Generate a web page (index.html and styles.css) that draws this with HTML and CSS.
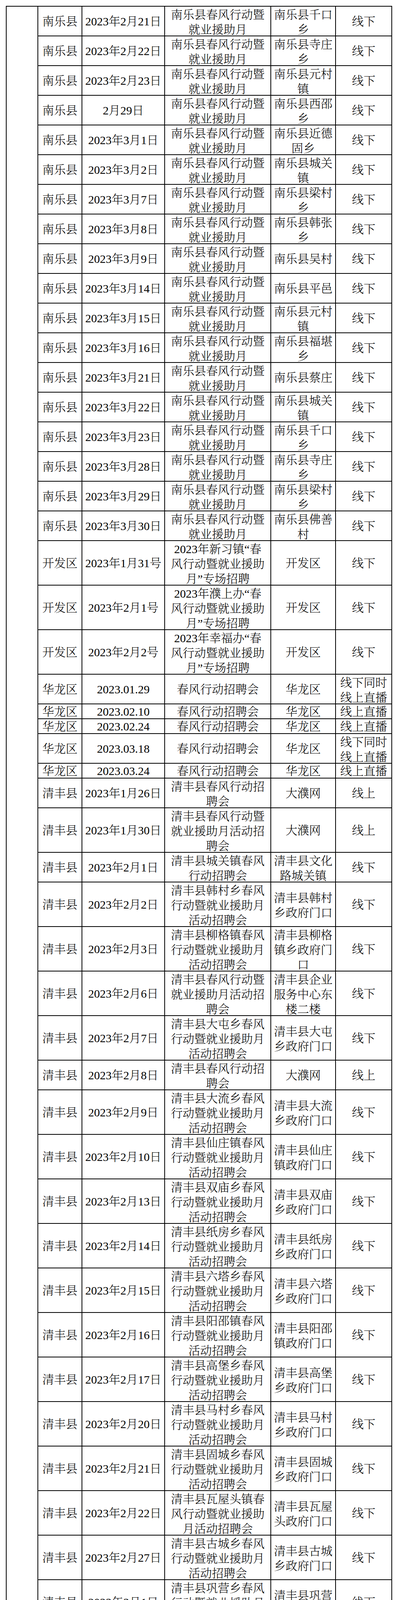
FILE: index.html
```html
<!DOCTYPE html>
<html lang="zh-CN">
<head>
<meta charset="utf-8">
<title>春风行动招聘会安排表</title>
<link rel="stylesheet" href="styles.css">
</head>
<body>
<table class="sheet">
<colgroup>
<col class="c-blank"><col class="c-area"><col class="c-date"><col class="c-name"><col class="c-place"><col class="c-mode">
</colgroup>
<tbody>
<tr><td class="blank" rowspan="64"></td><td><div class="t"><span>南乐县</span></div></td><td><div class="t"><span>2023年2月21日</span></div></td><td><div class="t m"><span>南乐县春风行动暨</span><span>就业援助月</span></div></td><td><div class="t m"><span>南乐县千口</span><span>乡</span></div></td><td><div class="t"><span>线下</span></div></td></tr>
<tr><td><div class="t"><span>南乐县</span></div></td><td><div class="t"><span>2023年2月22日</span></div></td><td><div class="t m"><span>南乐县春风行动暨</span><span>就业援助月</span></div></td><td><div class="t m"><span>南乐县寺庄</span><span>乡</span></div></td><td><div class="t"><span>线下</span></div></td></tr>
<tr><td><div class="t"><span>南乐县</span></div></td><td><div class="t"><span>2023年2月23日</span></div></td><td><div class="t m"><span>南乐县春风行动暨</span><span>就业援助月</span></div></td><td><div class="t m"><span>南乐县元村</span><span>镇</span></div></td><td><div class="t"><span>线下</span></div></td></tr>
<tr><td><div class="t"><span>南乐县</span></div></td><td><div class="t"><span>2月29日</span></div></td><td><div class="t m"><span>南乐县春风行动暨</span><span>就业援助月</span></div></td><td><div class="t m"><span>南乐县西邵</span><span>乡</span></div></td><td><div class="t"><span>线下</span></div></td></tr>
<tr><td><div class="t"><span>南乐县</span></div></td><td><div class="t"><span>2023年3月1日</span></div></td><td><div class="t m"><span>南乐县春风行动暨</span><span>就业援助月</span></div></td><td><div class="t m"><span>南乐县近德</span><span>固乡</span></div></td><td><div class="t"><span>线下</span></div></td></tr>
<tr><td><div class="t"><span>南乐县</span></div></td><td><div class="t"><span>2023年3月2日</span></div></td><td><div class="t m"><span>南乐县春风行动暨</span><span>就业援助月</span></div></td><td><div class="t m"><span>南乐县城关</span><span>镇</span></div></td><td><div class="t"><span>线下</span></div></td></tr>
<tr><td><div class="t"><span>南乐县</span></div></td><td><div class="t"><span>2023年3月7日</span></div></td><td><div class="t m"><span>南乐县春风行动暨</span><span>就业援助月</span></div></td><td><div class="t m"><span>南乐县梁村</span><span>乡</span></div></td><td><div class="t"><span>线下</span></div></td></tr>
<tr><td><div class="t"><span>南乐县</span></div></td><td><div class="t"><span>2023年3月8日</span></div></td><td><div class="t m"><span>南乐县春风行动暨</span><span>就业援助月</span></div></td><td><div class="t m"><span>南乐县韩张</span><span>乡</span></div></td><td><div class="t"><span>线下</span></div></td></tr>
<tr><td><div class="t"><span>南乐县</span></div></td><td><div class="t"><span>2023年3月9日</span></div></td><td><div class="t m"><span>南乐县春风行动暨</span><span>就业援助月</span></div></td><td><div class="t"><span>南乐县吴村</span></div></td><td><div class="t"><span>线下</span></div></td></tr>
<tr><td><div class="t"><span>南乐县</span></div></td><td><div class="t"><span>2023年3月14日</span></div></td><td><div class="t m"><span>南乐县春风行动暨</span><span>就业援助月</span></div></td><td><div class="t"><span>南乐县平邑</span></div></td><td><div class="t"><span>线下</span></div></td></tr>
<tr><td><div class="t"><span>南乐县</span></div></td><td><div class="t"><span>2023年3月15日</span></div></td><td><div class="t m"><span>南乐县春风行动暨</span><span>就业援助月</span></div></td><td><div class="t m"><span>南乐县元村</span><span>镇</span></div></td><td><div class="t"><span>线下</span></div></td></tr>
<tr><td><div class="t"><span>南乐县</span></div></td><td><div class="t"><span>2023年3月16日</span></div></td><td><div class="t m"><span>南乐县春风行动暨</span><span>就业援助月</span></div></td><td><div class="t m"><span>南乐县福堪</span><span>乡</span></div></td><td><div class="t"><span>线下</span></div></td></tr>
<tr><td><div class="t"><span>南乐县</span></div></td><td><div class="t"><span>2023年3月21日</span></div></td><td><div class="t m"><span>南乐县春风行动暨</span><span>就业援助月</span></div></td><td><div class="t"><span>南乐县蔡庄</span></div></td><td><div class="t"><span>线下</span></div></td></tr>
<tr><td><div class="t"><span>南乐县</span></div></td><td><div class="t"><span>2023年3月22日</span></div></td><td><div class="t m"><span>南乐县春风行动暨</span><span>就业援助月</span></div></td><td><div class="t m"><span>南乐县城关</span><span>镇</span></div></td><td><div class="t"><span>线下</span></div></td></tr>
<tr><td><div class="t"><span>南乐县</span></div></td><td><div class="t"><span>2023年3月23日</span></div></td><td><div class="t m"><span>南乐县春风行动暨</span><span>就业援助月</span></div></td><td><div class="t m"><span>南乐县千口</span><span>乡</span></div></td><td><div class="t"><span>线下</span></div></td></tr>
<tr><td><div class="t"><span>南乐县</span></div></td><td><div class="t"><span>2023年3月28日</span></div></td><td><div class="t m"><span>南乐县春风行动暨</span><span>就业援助月</span></div></td><td><div class="t m"><span>南乐县寺庄</span><span>乡</span></div></td><td><div class="t"><span>线下</span></div></td></tr>
<tr><td><div class="t"><span>南乐县</span></div></td><td><div class="t"><span>2023年3月29日</span></div></td><td><div class="t m"><span>南乐县春风行动暨</span><span>就业援助月</span></div></td><td><div class="t m"><span>南乐县梁村</span><span>乡</span></div></td><td><div class="t"><span>线下</span></div></td></tr>
<tr><td><div class="t"><span>南乐县</span></div></td><td><div class="t"><span>2023年3月30日</span></div></td><td><div class="t m"><span>南乐县春风行动暨</span><span>就业援助月</span></div></td><td><div class="t m"><span>南乐县佛善</span><span>村</span></div></td><td><div class="t"><span>线下</span></div></td></tr>
<tr><td><div class="t"><span>开发区</span></div></td><td><div class="t"><span>2023年1月31号</span></div></td><td><div class="t m"><span>2023年新习镇“春</span><span>风行动暨就业援助</span><span>月”专场招聘</span></div></td><td><div class="t"><span>开发区</span></div></td><td><div class="t"><span>线下</span></div></td></tr>
<tr><td><div class="t"><span>开发区</span></div></td><td><div class="t"><span>2023年2月1号</span></div></td><td><div class="t m"><span>2023年濮上办“春</span><span>风行动暨就业援助</span><span>月”专场招聘</span></div></td><td><div class="t"><span>开发区</span></div></td><td><div class="t"><span>线下</span></div></td></tr>
<tr><td><div class="t"><span>开发区</span></div></td><td><div class="t"><span>2023年2月2号</span></div></td><td><div class="t m"><span>2023年幸福办“春</span><span>风行动暨就业援助</span><span>月”专场招聘</span></div></td><td><div class="t"><span>开发区</span></div></td><td><div class="t"><span>线下</span></div></td></tr>
<tr><td><div class="t"><span>华龙区</span></div></td><td><div class="t"><span>2023.01.29</span></div></td><td><div class="t"><span>春风行动招聘会</span></div></td><td><div class="t"><span>华龙区</span></div></td><td><div class="t m"><span>线下同时</span><span>线上直播</span></div></td></tr>
<tr><td><div class="t"><span>华龙区</span></div></td><td><div class="t"><span>2023.02.10</span></div></td><td><div class="t"><span>春风行动招聘会</span></div></td><td><div class="t"><span>华龙区</span></div></td><td><div class="t"><span>线上直播</span></div></td></tr>
<tr><td><div class="t"><span>华龙区</span></div></td><td><div class="t"><span>2023.02.24</span></div></td><td><div class="t"><span>春风行动招聘会</span></div></td><td><div class="t"><span>华龙区</span></div></td><td><div class="t"><span>线上直播</span></div></td></tr>
<tr><td><div class="t"><span>华龙区</span></div></td><td><div class="t"><span>2023.03.18</span></div></td><td><div class="t"><span>春风行动招聘会</span></div></td><td><div class="t"><span>华龙区</span></div></td><td><div class="t m"><span>线下同时</span><span>线上直播</span></div></td></tr>
<tr><td><div class="t"><span>华龙区</span></div></td><td><div class="t"><span>2023.03.24</span></div></td><td><div class="t"><span>春风行动招聘会</span></div></td><td><div class="t"><span>华龙区</span></div></td><td><div class="t"><span>线上直播</span></div></td></tr>
<tr><td><div class="t"><span>清丰县</span></div></td><td><div class="t"><span>2023年1月26日</span></div></td><td><div class="t m"><span>清丰县春风行动招</span><span>聘会</span></div></td><td><div class="t"><span>大濮网</span></div></td><td><div class="t"><span>线上</span></div></td></tr>
<tr><td><div class="t"><span>清丰县</span></div></td><td><div class="t"><span>2023年1月30日</span></div></td><td><div class="t m"><span>清丰县春风行动暨</span><span>就业援助月活动招</span><span>聘会</span></div></td><td><div class="t"><span>大濮网</span></div></td><td><div class="t"><span>线上</span></div></td></tr>
<tr><td><div class="t"><span>清丰县</span></div></td><td><div class="t"><span>2023年2月1日</span></div></td><td><div class="t m"><span>清丰县城关镇春风</span><span>行动招聘会</span></div></td><td><div class="t m"><span>清丰县文化</span><span>路城关镇</span></div></td><td><div class="t"><span>线下</span></div></td></tr>
<tr><td><div class="t"><span>清丰县</span></div></td><td><div class="t"><span>2023年2月2日</span></div></td><td><div class="t m"><span>清丰县韩村乡春风</span><span>行动暨就业援助月</span><span>活动招聘会</span></div></td><td><div class="t m"><span>清丰县韩村</span><span>乡政府门口</span></div></td><td><div class="t"><span>线下</span></div></td></tr>
<tr><td><div class="t"><span>清丰县</span></div></td><td><div class="t"><span>2023年2月3日</span></div></td><td><div class="t m"><span>清丰县柳格镇春风</span><span>行动暨就业援助月</span><span>活动招聘会</span></div></td><td><div class="t m"><span>清丰县柳格</span><span>镇乡政府门</span><span>口</span></div></td><td><div class="t"><span>线下</span></div></td></tr>
<tr><td><div class="t"><span>清丰县</span></div></td><td><div class="t"><span>2023年2月6日</span></div></td><td><div class="t m"><span>清丰县春风行动暨</span><span>就业援助月活动招</span><span>聘会</span></div></td><td><div class="t m"><span>清丰县企业</span><span>服务中心东</span><span>楼二楼</span></div></td><td><div class="t"><span>线下</span></div></td></tr>
<tr><td><div class="t"><span>清丰县</span></div></td><td><div class="t"><span>2023年2月7日</span></div></td><td><div class="t m"><span>清丰县大屯乡春风</span><span>行动暨就业援助月</span><span>活动招聘会</span></div></td><td><div class="t m"><span>清丰县大屯</span><span>乡政府门口</span></div></td><td><div class="t"><span>线下</span></div></td></tr>
<tr><td><div class="t"><span>清丰县</span></div></td><td><div class="t"><span>2023年2月8日</span></div></td><td><div class="t m"><span>清丰县春风行动招</span><span>聘会</span></div></td><td><div class="t"><span>大濮网</span></div></td><td><div class="t"><span>线上</span></div></td></tr>
<tr><td><div class="t"><span>清丰县</span></div></td><td><div class="t"><span>2023年2月9日</span></div></td><td><div class="t m"><span>清丰县大流乡春风</span><span>行动暨就业援助月</span><span>活动招聘会</span></div></td><td><div class="t m"><span>清丰县大流</span><span>乡政府门口</span></div></td><td><div class="t"><span>线下</span></div></td></tr>
<tr><td><div class="t"><span>清丰县</span></div></td><td><div class="t"><span>2023年2月10日</span></div></td><td><div class="t m"><span>清丰县仙庄镇春风</span><span>行动暨就业援助月</span><span>活动招聘会</span></div></td><td><div class="t m"><span>清丰县仙庄</span><span>镇政府门口</span></div></td><td><div class="t"><span>线下</span></div></td></tr>
<tr><td><div class="t"><span>清丰县</span></div></td><td><div class="t"><span>2023年2月13日</span></div></td><td><div class="t m"><span>清丰县双庙乡春风</span><span>行动暨就业援助月</span><span>活动招聘会</span></div></td><td><div class="t m"><span>清丰县双庙</span><span>乡政府门口</span></div></td><td><div class="t"><span>线下</span></div></td></tr>
<tr><td><div class="t"><span>清丰县</span></div></td><td><div class="t"><span>2023年2月14日</span></div></td><td><div class="t m"><span>清丰县纸房乡春风</span><span>行动暨就业援助月</span><span>活动招聘会</span></div></td><td><div class="t m"><span>清丰县纸房</span><span>乡政府门口</span></div></td><td><div class="t"><span>线下</span></div></td></tr>
<tr><td><div class="t"><span>清丰县</span></div></td><td><div class="t"><span>2023年2月15日</span></div></td><td><div class="t m"><span>清丰县六塔乡春风</span><span>行动暨就业援助月</span><span>活动招聘会</span></div></td><td><div class="t m"><span>清丰县六塔</span><span>乡政府门口</span></div></td><td><div class="t"><span>线下</span></div></td></tr>
<tr><td><div class="t"><span>清丰县</span></div></td><td><div class="t"><span>2023年2月16日</span></div></td><td><div class="t m"><span>清丰县阳邵镇春风</span><span>行动暨就业援助月</span><span>活动招聘会</span></div></td><td><div class="t m"><span>清丰县阳邵</span><span>镇政府门口</span></div></td><td><div class="t"><span>线下</span></div></td></tr>
<tr><td><div class="t"><span>清丰县</span></div></td><td><div class="t"><span>2023年2月17日</span></div></td><td><div class="t m"><span>清丰县高堡乡春风</span><span>行动暨就业援助月</span><span>活动招聘会</span></div></td><td><div class="t m"><span>清丰县高堡</span><span>乡政府门口</span></div></td><td><div class="t"><span>线下</span></div></td></tr>
<tr><td><div class="t"><span>清丰县</span></div></td><td><div class="t"><span>2023年2月20日</span></div></td><td><div class="t m"><span>清丰县马村乡春风</span><span>行动暨就业援助月</span><span>活动招聘会</span></div></td><td><div class="t m"><span>清丰县马村</span><span>乡政府门口</span></div></td><td><div class="t"><span>线下</span></div></td></tr>
<tr><td><div class="t"><span>清丰县</span></div></td><td><div class="t"><span>2023年2月21日</span></div></td><td><div class="t m"><span>清丰县固城乡春风</span><span>行动暨就业援助月</span><span>活动招聘会</span></div></td><td><div class="t m"><span>清丰县固城</span><span>乡政府门口</span></div></td><td><div class="t"><span>线下</span></div></td></tr>
<tr><td><div class="t"><span>清丰县</span></div></td><td><div class="t"><span>2023年2月22日</span></div></td><td><div class="t m"><span>清丰县瓦屋头镇春</span><span>风行动暨就业援助</span><span>月活动招聘会</span></div></td><td><div class="t m"><span>清丰县瓦屋</span><span>头政府门口</span></div></td><td><div class="t"><span>线下</span></div></td></tr>
<tr><td><div class="t"><span>清丰县</span></div></td><td><div class="t"><span>2023年2月27日</span></div></td><td><div class="t m"><span>清丰县古城乡春风</span><span>行动暨就业援助月</span><span>活动招聘会</span></div></td><td><div class="t m"><span>清丰县古城</span><span>乡政府门口</span></div></td><td><div class="t"><span>线下</span></div></td></tr>
<tr><td><div class="t"><span>清丰县</span></div></td><td><div class="t"><span>2023年3月1日</span></div></td><td><div class="t m"><span>清丰县巩营乡春风</span><span>行动暨就业援助月</span><span>活动招聘会</span></div></td><td><div class="t m"><span>清丰县巩营</span><span>乡政府门口</span></div></td><td><div class="t"><span>线下</span></div></td></tr>
<tr><td><div class="t"><span>清丰县</span></div></td><td><div class="t"><span>2023年3月3日</span></div></td><td><div class="t m"><span>清丰县春风行动暨</span><span>就业援助月活动招</span><span>聘会</span></div></td><td><div class="t"><span>大濮网</span></div></td><td><div class="t"><span>线上</span></div></td></tr>
<tr><td><div class="t"><span>清丰县</span></div></td><td><div class="t"><span>2023年3月9日</span></div></td><td><div class="t m"><span>清丰县春风行动招</span><span>聘会</span></div></td><td><div class="t m"><span>清丰县企业</span><span>服务中心东</span><span>楼二楼</span></div></td><td><div class="t"><span>线下</span></div></td></tr>
<tr><td><div class="t"><span>清丰县</span></div></td><td><div class="t"><span>2023年3月12日</span></div></td><td><div class="t m"><span>清丰县六塔乡春风</span><span>行动招聘会</span></div></td><td><div class="t m"><span>清丰县六塔</span><span>乡政府门口</span></div></td><td><div class="t"><span>线下</span></div></td></tr>
<tr><td><div class="t"><span>清丰县</span></div></td><td><div class="t"><span>2023年3月13日</span></div></td><td><div class="t m"><span>清丰县城关镇春风</span><span>行动招聘会</span></div></td><td><div class="t m"><span>清丰县文化</span><span>路城关镇</span></div></td><td><div class="t"><span>线下</span></div></td></tr>
<tr><td><div class="t"><span>清丰县</span></div></td><td><div class="t"><span>2023年3月17日</span></div></td><td><div class="t m"><span>清丰县大屯乡春风</span><span>行动招聘会</span></div></td><td><div class="t m"><span>清丰县大屯</span><span>乡政府门口</span></div></td><td><div class="t"><span>线下</span></div></td></tr>
<tr><td><div class="t"><span>清丰县</span></div></td><td><div class="t"><span>2023年3月21日</span></div></td><td><div class="t m"><span>清丰县马村乡春风</span><span>行动招聘会</span></div></td><td><div class="t m"><span>清丰县马村</span><span>乡政府门口</span></div></td><td><div class="t"><span>线下</span></div></td></tr>
<tr><td><div class="t"><span>清丰县</span></div></td><td><div class="t"><span>2023年3月24日</span></div></td><td><div class="t m"><span>清丰县大屯乡春风</span><span>行动招聘会</span></div></td><td><div class="t m"><span>清丰县大屯</span><span>乡政府门口</span></div></td><td><div class="t"><span>线下</span></div></td></tr>
<tr><td><div class="t"><span>清丰县</span></div></td><td><div class="t"><span>2023年3月27日</span></div></td><td><div class="t m"><span>清丰县韩村镇春风</span><span>行动招聘会</span></div></td><td><div class="t m"><span>清丰县韩村</span><span>镇政府门口</span></div></td><td><div class="t"><span>线下</span></div></td></tr>
<tr><td><div class="t"><span>清丰县</span></div></td><td><div class="t"><span>2023年3月31日</span></div></td><td><div class="t m"><span>清丰县柳格镇春风</span><span>行动招聘会</span></div></td><td><div class="t m"><span>清丰县柳格</span><span>镇政府门口</span></div></td><td><div class="t"><span>线下</span></div></td></tr>
<tr><td><div class="t"><span>濮阳县</span></div></td><td><div class="t"><span>2023年1月17日</span></div></td><td><div class="t m"><span>人力资源公司专场</span><span>招聘会（省外企业</span><span>招工信息）</span></div></td><td><div class="t"><span>三楼办公室</span></div></td><td><div class="t"><span>线上直播</span></div></td></tr>
<tr><td><div class="t"><span>濮阳县</span></div></td><td><div class="t"><span>2023年1月30日</span></div></td><td><div class="t m"><span>春风行动暨就业援</span><span>助月专场招聘会</span></div></td><td><div class="t"><span>上亿广场</span></div></td><td><div class="t m"><span>线上、线</span><span>下</span></div></td></tr>
<tr><td><div class="t m"><span>工业园</span><span>区</span></div></td><td><div class="t"><span>2023年3月1日</span></div></td><td><div class="t m"><span>“春风行动”招聘</span><span>会</span></div></td><td><div class="t"><span>工业园区</span></div></td><td><div class="t"><span>线下</span></div></td></tr>
<tr><td><div class="t"><span>示范区</span></div></td><td><div class="t"><span>2023年2月2日</span></div></td><td><div class="t m"><span>示范区春风行动招</span><span>聘会</span></div></td><td><div class="t"><span>论语广场</span></div></td><td><div class="t"><span>线下</span></div></td></tr>
<tr><td><div class="t"><span>示范区</span></div></td><td><div class="t"><span>2023年2月16日</span></div></td><td><div class="t m"><span>示范区春风行动云</span><span>招聘</span></div></td><td><div class="t"><span>人才网</span></div></td><td><div class="t"><span>线上</span></div></td></tr>
<tr><td><div class="t"><span>范县</span></div></td><td><div class="t"><span>2023年1月13日</span></div></td><td><div class="t"><span>就业红娘直播带岗</span></div></td><td><div class="t"><span>范县濮城镇</span></div></td><td><div class="t"><span>线上直播</span></div></td></tr>
<tr><td><div class="t"><span>范县</span></div></td><td><div class="t"><span>2023年1月30日</span></div></td><td><div class="t"><span>就业红娘发布岗位</span></div></td><td><div class="t"><span>范县新区</span></div></td><td><div class="t"><span>线上</span></div></td></tr>
<tr><td><div class="t"><span>范县</span></div></td><td><div class="t"><span>2023年2月10日</span></div></td><td><div class="t"><span>就业红娘直播带岗</span></div></td><td><div class="t"><span>范县王楼</span></div></td><td><div class="t"><span>线上直播</span></div></td></tr>
<tr><td><div class="t"><span>范县</span></div></td><td><div class="t"><span>2023年3月15日</span></div></td><td><div class="t"><span>就业红娘走进企业</span></div></td><td><div class="t"><span>范县张庄镇</span></div></td><td><div class="t"><span>线下</span></div></td></tr>
</tbody>
</table>
</body>
</html>
```

FILE: styles.css
```css
html, body {
  margin: 0;
  padding: 0;
  background: #ffffff;
}

.sheet {
  border-collapse: collapse;
  table-layout: fixed;
  width: 990px;
  margin: 15px 0 0 15px;
  font-family: "Liberation Serif", "Noto Serif CJK SC", "Noto Sans CJK SC", serif;
  font-size: 30px;
  font-weight: 300;
  color: #000000;
}

.c-blank { width: 81px; }
.c-area  { width: 113px; }
.c-date  { width: 212px; }
.c-name  { width: 272px; }
.c-place { width: 166px; }
.c-mode  { width: 144px; }

.sheet td {
  border: 2px solid #000000;
  padding: 0;
  text-align: center;
  vertical-align: middle;
  white-space: nowrap;
  line-height: 38px;
}

/* each line sits in a fixed 38px slot, so fallback font metrics never grow a row */
.sheet td .t {
  display: flex;
  flex-direction: column;
  margin: -1px 0;
  position: relative;
  top: 1px;
}

.sheet td .t > span {
  display: block;
  height: 38px;
  line-height: 38px;
  overflow: visible;
}

.sheet td .t.m {
  top: 3px;
}

.sheet td.blank {
  padding: 0;
}
```
